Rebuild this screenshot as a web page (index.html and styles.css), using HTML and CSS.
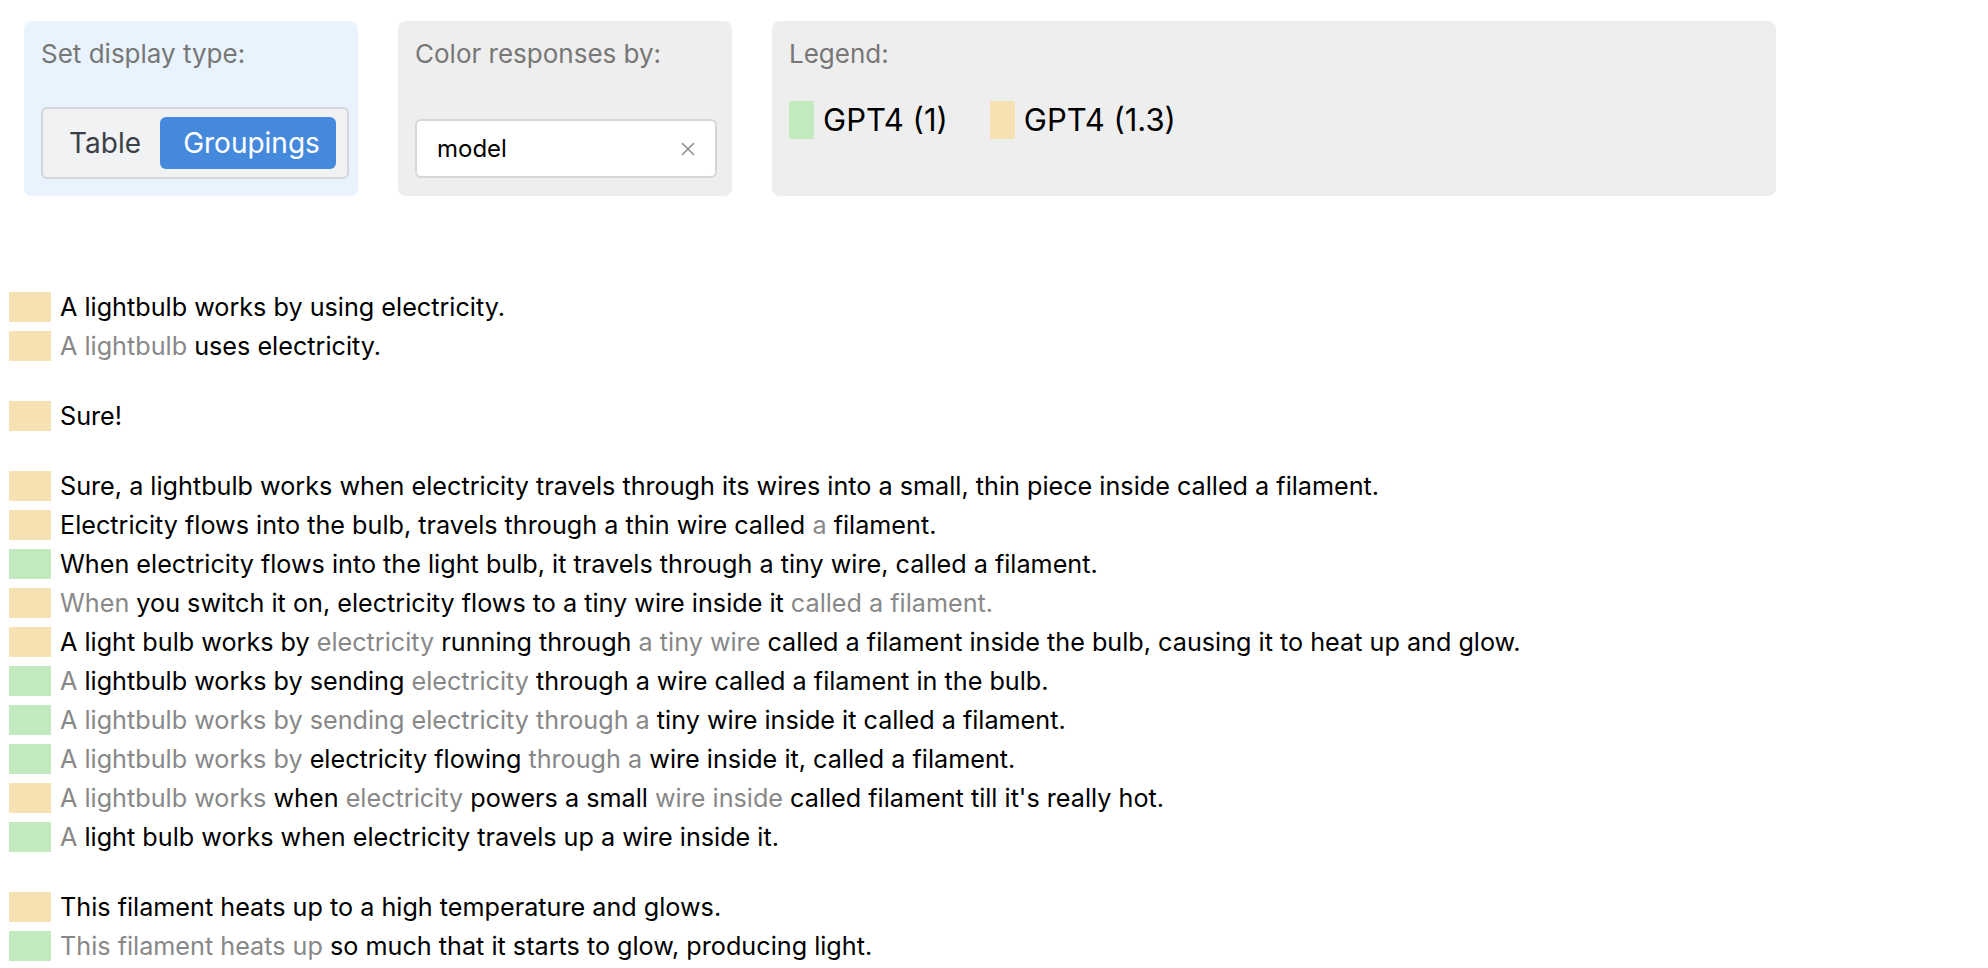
FILE: index.html
```html
<!DOCTYPE html>
<html lang="en">
  <head>
    <meta charset="UTF-8" />
    <meta name="viewport" content="width=device-width, initial-scale=1.0" />
    <title>Response Groupings</title>
    <link rel="stylesheet" href="styles.css">
  </head>

  <body>
    <div id="controls-container">
      <div class="panel panel-blue panel-display">
        <div class="panel-label">Set display type:</div>
        <div class="segmented">
          <button class="segment">Table</button>
          <button class="segment active">Groupings</button>
        </div>
      </div>

      <div class="panel panel-color">
        <div class="panel-label">Color responses by:</div>
        <div class="select-box">
          <span class="select-value">model</span>
          <svg class="select-clear" width="14" height="14" viewBox="0 0 14 14">
            <path d="M1.5 1.5 L12.5 12.5 M12.5 1.5 L1.5 12.5" stroke="#8a8d91" stroke-width="1.6" fill="none" stroke-linecap="round" />
          </svg>
        </div>
      </div>

      <div class="panel panel-legend">
        <div class="panel-label">Legend:</div>
        <div class="legend-items">
          <div class="legend-item"><span class="legend-swatch green"></span>GPT4 (1)</div>
          <div class="legend-item"><span class="legend-swatch yellow"></span>GPT4 (1.3)</div>
        </div>
      </div>
    </div>

    <div id="result-container">
      <div class="group">
        <div class="row"><span class="swatch yellow"></span><p class="response">A lightbulb works by using electricity.</p></div>
        <div class="row"><span class="swatch yellow"></span><p class="response"><span class="dim">A lightbulb</span> uses electricity.</p></div>
      </div>

      <div class="group">
        <div class="row"><span class="swatch yellow"></span><p class="response">Sure!</p></div>
      </div>

      <div class="group">
        <div class="row"><span class="swatch yellow"></span><p class="response">Sure, a lightbulb works when electricity travels through its wires into a small, thin piece inside called a filament.</p></div>
        <div class="row"><span class="swatch yellow"></span><p class="response">Electricity flows into the bulb, travels through a thin wire called <span class="dim">a</span> filament.</p></div>
        <div class="row"><span class="swatch green"></span><p class="response">When electricity flows into the light bulb, it travels through a tiny wire, called a filament.</p></div>
        <div class="row"><span class="swatch yellow"></span><p class="response"><span class="dim">When</span> you switch it on, electricity flows to a tiny wire inside it <span class="dim">called a filament.</span></p></div>
        <div class="row"><span class="swatch yellow"></span><p class="response">A light bulb works by <span class="dim">electricity</span> running through <span class="dim">a tiny wire</span> called a filament inside the bulb, causing it to heat up and glow.</p></div>
        <div class="row"><span class="swatch green"></span><p class="response"><span class="dim">A</span> lightbulb works by sending <span class="dim">electricity</span> through a wire called a filament in the bulb.</p></div>
        <div class="row"><span class="swatch green"></span><p class="response"><span class="dim">A lightbulb works by sending electricity through a</span> tiny wire inside it called a filament.</p></div>
        <div class="row"><span class="swatch green"></span><p class="response"><span class="dim">A lightbulb works by</span> electricity flowing <span class="dim">through a</span> wire inside it, called a filament.</p></div>
        <div class="row"><span class="swatch yellow"></span><p class="response"><span class="dim">A lightbulb works</span> when <span class="dim">electricity</span> powers a small <span class="dim">wire inside</span> called filament till it's really hot.</p></div>
        <div class="row"><span class="swatch green"></span><p class="response"><span class="dim">A</span> light bulb works when electricity travels up a wire inside it.</p></div>
      </div>

      <div class="group">
        <div class="row"><span class="swatch yellow"></span><p class="response">This filament heats up to a high temperature and glows.</p></div>
        <div class="row"><span class="swatch green"></span><p class="response"><span class="dim">This filament heats up</span> so much that it starts to glow, producing light.</p></div>
      </div>
    </div>
  </body>
</html>
```

FILE: styles.css
```css
body {
  margin: 0;
  font-family: Inter, "Noto Sans", sans-serif;
  color: #000;
  background: #fff;
}

#controls-container {
  display: flex;
  flex-direction: row;
  gap: 40px;
  padding: 21px 24px 0;
}

.panel {
  display: flex;
  flex-direction: column;
  height: 175px;
  padding: 17px 17px 17px;
  box-sizing: border-box;
  border-radius: 8px;
  background: #eeeeee;
}

.panel-blue {
  background: #e9f3fd;
}

.panel-display,
.panel-color {
  width: 334px;
}

.panel-legend {
  width: 1004px;
}

.panel-label {
  font-size: 26px;
  line-height: 31px;
  color: #777;
}

/* display type switch */
.segmented {
  display: flex;
  margin-top: auto;
  width: 308px;
  height: 72px;
  padding: 8px 11px 8px 7px;
  box-sizing: border-box;
  border: 2px solid #d3d6da;
  border-radius: 6px;
  background: #f1f2f4;
}

.segment {
  border: none;
  background: none;
  font-family: Inter, sans-serif;
  font-size: 28px;
  color: #3b4046;
  border-radius: 6px;
  padding: 0;
  cursor: pointer;
}

.segment:first-child {
  width: 110px;
}

.segment.active {
  flex: 1;
  padding-left: 7px;
  background: #4589dd;
  color: #fff;
}

/* color by select */
.select-box {
  display: flex;
  align-items: center;
  margin-top: auto;
  margin-bottom: 1px;
  width: 302px;
  height: 59px;
  padding: 0 20px 0 20px;
  box-sizing: border-box;
  border: 2px solid #d3d6da;
  border-radius: 6px;
  background: #fff;
}

.select-value {
  flex: 1;
  font-size: 24px;
  color: #000;
}

/* legend */
.legend-items {
  display: flex;
  gap: 42px;
  margin-top: 32px;
}

.legend-item {
  display: flex;
  align-items: center;
  gap: 9px;
  font-size: 31px;
  line-height: 38px;
}

.legend-swatch {
  width: 25px;
  height: 38px;
}

/* grouped responses */
#result-container {
  margin-top: 96px;
  padding-left: 9px;
}

.group {
  display: flex;
  flex-direction: column;
  gap: 9px;
  margin-bottom: 40px;
}

.row {
  display: flex;
  align-items: center;
  gap: 9px;
  height: 30px;
}

.swatch {
  flex: none;
  width: 42px;
  height: 30px;
}

.yellow {
  background: #f5e1b2;
}

.green {
  background: #c3eabf;
}

.response {
  margin: 0;
  font-size: 25.2px;
  line-height: 30px;
  white-space: nowrap;
}

.dim {
  color: #888;
}
```
